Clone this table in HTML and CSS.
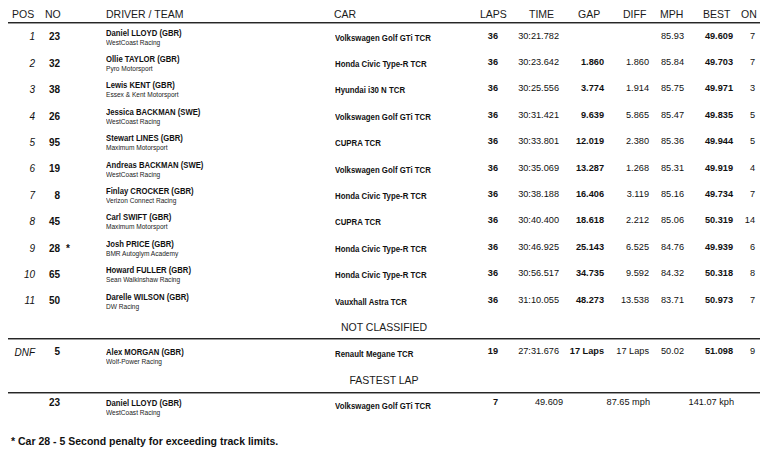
FILE: index.html
```html
<!DOCTYPE html>
<html>
<head>
<meta charset="utf-8">
<link rel="stylesheet" href="styles.css">
</head>
<body>
<div class="sheet">
  <div class="head">
    <span>POS</span><span>NO</span><span>DRIVER / TEAM</span><span>CAR</span><span>LAPS</span><span>TIME</span><span>GAP</span><span>DIFF</span><span>MPH</span><span>BEST</span><span>ON</span>
  </div>

  <div class="row">
    <span class="pos">1</span><span class="no">23</span><span class="flag"></span>
    <div class="drv"><b>Daniel LLOYD (GBR)</b><small>WestCoast Racing</small></div>
    <span class="car">Volkswagen Golf GTi TCR</span>
    <span class="num b">36</span><span class="num">30:21.782</span><span class="num b"></span><span class="num"></span><span class="num">85.93</span><span class="num b">49.609</span><span class="num on">7</span>
  </div>
  <div class="row">
    <span class="pos">2</span><span class="no">32</span><span class="flag"></span>
    <div class="drv"><b>Ollie TAYLOR (GBR)</b><small>Pyro Motorsport</small></div>
    <span class="car">Honda Civic Type-R TCR</span>
    <span class="num b">36</span><span class="num">30:23.642</span><span class="num b">1.860</span><span class="num">1.860</span><span class="num">85.84</span><span class="num b">49.703</span><span class="num on">7</span>
  </div>
  <div class="row">
    <span class="pos">3</span><span class="no">38</span><span class="flag"></span>
    <div class="drv"><b>Lewis KENT (GBR)</b><small>Essex &amp; Kent Motorsport</small></div>
    <span class="car">Hyundai i30 N TCR</span>
    <span class="num b">36</span><span class="num">30:25.556</span><span class="num b">3.774</span><span class="num">1.914</span><span class="num">85.75</span><span class="num b">49.971</span><span class="num on">3</span>
  </div>
  <div class="row">
    <span class="pos">4</span><span class="no">26</span><span class="flag"></span>
    <div class="drv"><b>Jessica BACKMAN (SWE)</b><small>WestCoast Racing</small></div>
    <span class="car">Volkswagen Golf GTi TCR</span>
    <span class="num b">36</span><span class="num">30:31.421</span><span class="num b">9.639</span><span class="num">5.865</span><span class="num">85.47</span><span class="num b">49.835</span><span class="num on">5</span>
  </div>
  <div class="row">
    <span class="pos">5</span><span class="no">95</span><span class="flag"></span>
    <div class="drv"><b>Stewart LINES (GBR)</b><small>Maximum Motorsport</small></div>
    <span class="car">CUPRA TCR</span>
    <span class="num b">36</span><span class="num">30:33.801</span><span class="num b">12.019</span><span class="num">2.380</span><span class="num">85.36</span><span class="num b">49.944</span><span class="num on">5</span>
  </div>
  <div class="row">
    <span class="pos">6</span><span class="no">19</span><span class="flag"></span>
    <div class="drv"><b>Andreas BACKMAN (SWE)</b><small>WestCoast Racing</small></div>
    <span class="car">Volkswagen Golf GTi TCR</span>
    <span class="num b">36</span><span class="num">30:35.069</span><span class="num b">13.287</span><span class="num">1.268</span><span class="num">85.31</span><span class="num b">49.919</span><span class="num on">4</span>
  </div>
  <div class="row">
    <span class="pos">7</span><span class="no">8</span><span class="flag"></span>
    <div class="drv"><b>Finlay CROCKER (GBR)</b><small>Verizon Connect Racing</small></div>
    <span class="car">Honda Civic Type-R TCR</span>
    <span class="num b">36</span><span class="num">30:38.188</span><span class="num b">16.406</span><span class="num">3.119</span><span class="num">85.16</span><span class="num b">49.734</span><span class="num on">7</span>
  </div>
  <div class="row">
    <span class="pos">8</span><span class="no">45</span><span class="flag"></span>
    <div class="drv"><b>Carl SWIFT (GBR)</b><small>Maximum Motorsport</small></div>
    <span class="car">CUPRA TCR</span>
    <span class="num b">36</span><span class="num">30:40.400</span><span class="num b">18.618</span><span class="num">2.212</span><span class="num">85.06</span><span class="num b">50.319</span><span class="num on">14</span>
  </div>
  <div class="row">
    <span class="pos">9</span><span class="no">28</span><span class="flag">*</span>
    <div class="drv"><b>Josh PRICE (GBR)</b><small>BMR Autoglym Academy</small></div>
    <span class="car">Honda Civic Type-R TCR</span>
    <span class="num b">36</span><span class="num">30:46.925</span><span class="num b">25.143</span><span class="num">6.525</span><span class="num">84.76</span><span class="num b">49.939</span><span class="num on">6</span>
  </div>
  <div class="row">
    <span class="pos">10</span><span class="no">65</span><span class="flag"></span>
    <div class="drv"><b>Howard FULLER (GBR)</b><small>Sean Walkinshaw Racing</small></div>
    <span class="car">Honda Civic Type-R TCR</span>
    <span class="num b">36</span><span class="num">30:56.517</span><span class="num b">34.735</span><span class="num">9.592</span><span class="num">84.32</span><span class="num b">50.318</span><span class="num on">8</span>
  </div>
  <div class="row">
    <span class="pos">11</span><span class="no">50</span><span class="flag"></span>
    <div class="drv"><b>Darelle WILSON (GBR)</b><small>DW Racing</small></div>
    <span class="car">Vauxhall Astra TCR</span>
    <span class="num b">36</span><span class="num">31:10.055</span><span class="num b">48.273</span><span class="num">13.538</span><span class="num">83.71</span><span class="num b">50.973</span><span class="num on">7</span>
  </div>

  <div class="section">NOT CLASSIFIED</div>

  <div class="row row--dnf">
    <span class="pos">DNF</span><span class="no">5</span><span class="flag"></span>
    <div class="drv"><b>Alex MORGAN (GBR)</b><small>Wolf-Power Racing</small></div>
    <span class="car">Renault Megane TCR</span>
    <span class="num b">19</span><span class="num">27:31.676</span><span class="num b">17 Laps</span><span class="num">17 Laps</span><span class="num">50.02</span><span class="num b">51.098</span><span class="num on">9</span>
  </div>

  <div class="section section--fl">FASTEST LAP</div>

  <div class="row row--fl">
    <span class="pos"></span><span class="no">23</span><span class="flag"></span>
    <div class="drv"><b>Daniel LLOYD (GBR)</b><small>WestCoast Racing</small></div>
    <span class="car">Volkswagen Golf GTi TCR</span>
    <span class="num b">7</span><span class="num fl-time">49.609</span><span class="num"></span><span class="num fl-wide">87.65 mph</span><span class="num"></span><span class="num fl-wide">141.07 kph</span><span class="num on"></span>
  </div>

  <p class="note">* Car 28 - 5 Second penalty for exceeding track limits.</p>
</div>
</body>
</html>
```

FILE: styles.css
```css
html, body {
  margin: 0;
  padding: 0;
  background: #ffffff;
}

body {
  font-family: "Liberation Sans", Arial, sans-serif;
  color: #111111;
}

.sheet {
  width: 752px;
  margin-left: 8px;
}

/* header row */
.head {
  display: grid;
  grid-template-columns: 33px 61px 228px 146px 49px 49px 45px 37px 43px 38px 1fr;
  padding: 8px 0 2px 4px;
  font-size: 10.5px;
  line-height: 12px;
  color: #1a1a1a;
  border-bottom: 1px solid #262626;
  box-shadow: 0 1px 0 #9a9a9a;
}

.head span {
  white-space: nowrap;
}

/* data rows */
.row {
  --pad-name: 4.6px;
  --pad-pos: 8.4px;
  --pad-no: 8.4px;
  --pad-car: 8.6px;
  --pad-num: 7.6px;
  display: grid;
  grid-template-columns: 28px 25px 45px 229px 135px 29px 61px 45px 45px 35px 49px 26px;
  align-items: start;
  height: 26.4px;
}

.row--dnf {
  --pad-name: 7.4px;
  --pad-pos: 7.4px;
  --pad-no: 6.8px;
  --pad-car: 9.2px;
  --pad-num: 6.8px;
  height: 26px;
}

.row--fl {
  --pad-name: 4.4px;
  --pad-pos: 4px;
  --pad-no: 4px;
  --pad-car: 7.2px;
  --pad-num: 4px;
  height: 26px;
}

.pos {
  padding-top: var(--pad-pos);
  padding-right: 1px;
  text-align: right;
  font-size: 10px;
  line-height: 11px;
  font-style: italic;
}

.no {
  padding-top: var(--pad-no);
  padding-right: 1px;
  text-align: right;
  font-size: 10px;
  line-height: 11px;
  font-weight: bold;
}

.flag {
  padding-top: var(--pad-no);
  padding-left: 5px;
  font-size: 10px;
  line-height: 11px;
  font-weight: bold;
}

.drv {
  display: flex;
  flex-direction: column;
  align-items: flex-start;
  padding-top: var(--pad-name);
  white-space: nowrap;
}

.drv b,
.drv small {
  display: block;
  transform: scaleX(0.82);
  transform-origin: 0 50%;
}

.drv b {
  font-size: 9.4px;
  line-height: 10px;
  font-weight: bold;
}

.drv small {
  font-size: 8px;
  line-height: 9px;
  color: #222222;
}

.car {
  padding-top: var(--pad-car);
  font-size: 9.4px;
  line-height: 11px;
  font-weight: bold;
  white-space: nowrap;
  transform: scaleX(0.835);
  transform-origin: 0 50%;
}

.num {
  padding-top: var(--pad-num);
  padding-right: 1px;
  text-align: right;
  font-size: 9.2px;
  line-height: 11px;
  white-space: nowrap;
}

.num.b {
  font-weight: bold;
}

.num.on {
  padding-right: 5px;
}

.fl-time {
  margin-right: -4px;
}

.fl-wide {
  padding-right: 0;
}

/* section headings */
.section {
  padding: 8px 0 5px;
  text-align: center;
  font-size: 10.5px;
  line-height: 12px;
  color: #1a1a1a;
  border-bottom: 1px solid #262626;
  box-shadow: 0 1px 0 #9a9a9a;
}

.section--fl {
  padding: 9px 0 6px;
}

.note {
  margin: 16px 0 0 3px;
  font-size: 10.5px;
  line-height: 12px;
  font-weight: bold;
}
```
